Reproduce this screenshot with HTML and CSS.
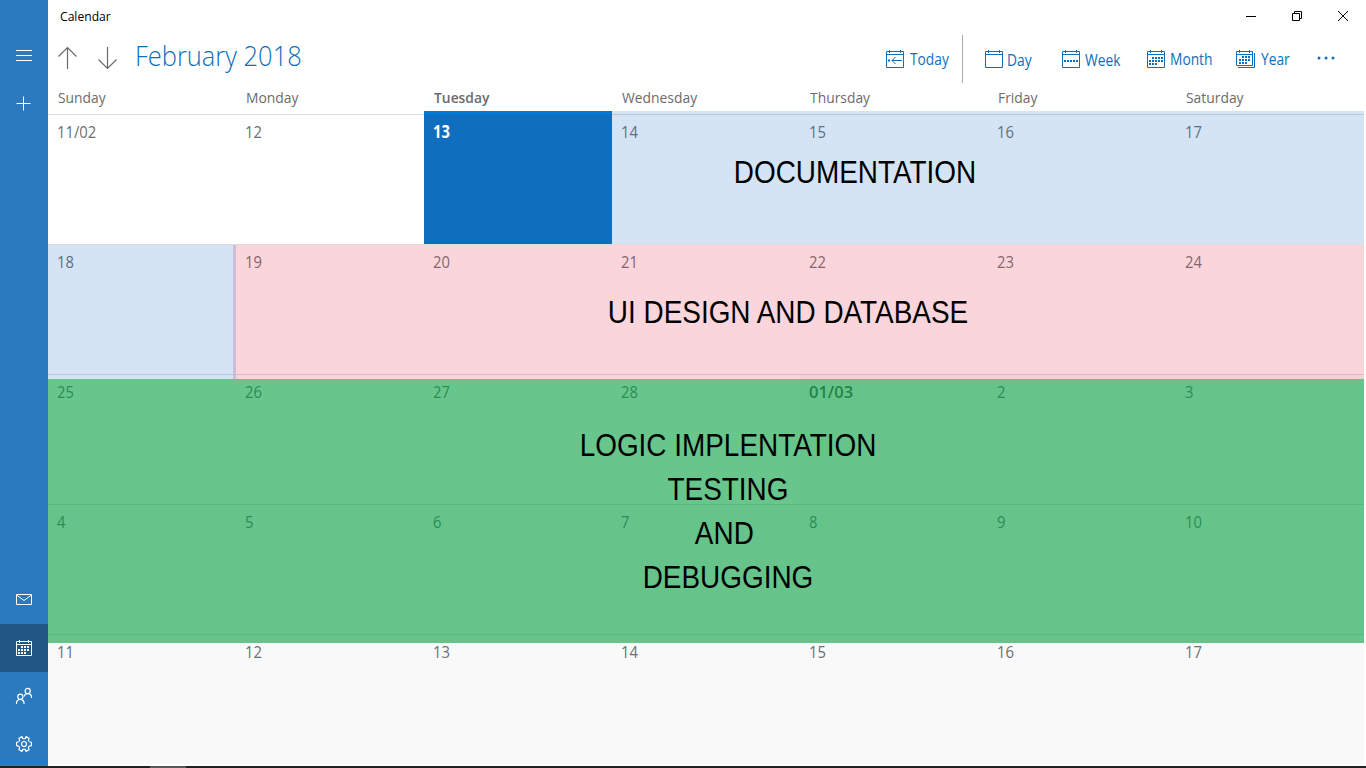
FILE: index.html
```html
<!DOCTYPE html>
<html lang="en">
<head>
<meta charset="utf-8">
<title>Calendar</title>
<link rel="stylesheet" href="styles.css">
</head>
<body>
<div class="window">
  <nav class="rail">
    <div class="rail-item menu"><svg width="16" height="16" viewBox="0 0 16 16"><path d="M0 2.5h16M0 7.5h16M0 12.5h16"/></svg></div>
    <div class="rail-item"><svg width="16" height="16" viewBox="0 0 16 16"><path d="M.5 7.5h14M7.5.5v14"/></svg></div>
    <div class="rail-item mail"><svg width="16" height="16" viewBox="0 0 16 16"><path d="M.5 2.5h15v10H.5zM.5 3l7.5 5.500L15.500 3"/></svg></div>
    <div class="rail-item active"><svg width="16" height="16" viewBox="0 0 16 16"><path d="M.5 1.500h15v14H.5zM.5 4.500h15M3.500 0v3M12.500 0v3"/><path stroke-width="2" stroke-dasharray="2 1" d="M5 7h8M2 10h11M2 13h8"/></svg></div>
    <div class="rail-item"><svg width="16" height="16" viewBox="0 0 16 16"><g stroke-width="1.200"><circle cx="4.300" cy="8.800" r="2.600"/><path d="M.5 16v-1c0-2 1.700-3.500 3.800-3.500S8 13 8 15v1"/><circle cx="11.700" cy="2.900" r="2.600"/><path d="M8.200 8.500C8.500 6.800 9.900 5.600 11.700 5.600c2.100 0 3.800 1.500 3.800 3.500v1"/></g></svg></div>
    <div class="rail-item"><svg width="16" height="16" viewBox="0 0 16 16"><g stroke-width="1.200"><circle cx="8" cy="8" r="2.500"/><path d="M6 .7 6.700 2.500Q8 3.300 9.300 2.500L10 .7 13 2.300 12.400 4.500Q12.700 6 15.400 6.400v3.200Q12.700 10 12.400 11.500L13 13.700 10 15.300 9.300 13.500Q8 12.700 6.700 13.500L6 15.300 3 13.700 3.600 11.500Q3.300 10 .6 9.600V6.400Q3.300 6 3.600 4.500L3 2.300z"/></g></svg></div>
  </nav>
  <main class="main">
    <header class="titlebar">
      <span class="app-name">Calendar</span>
      <div class="controls">
        <svg width="10" height="10" viewBox="0 0 10 10"><path d="M0 5.500h10"/></svg>
        <svg width="10" height="10" viewBox="0 0 10 10"><path d="M.5 2.500h7v7h-7zM2.500 2.500v-2h7v7h-2"/></svg>
        <svg width="10" height="10" viewBox="0 0 10 10"><path d="M0 0l10 10M10 0L0 10"/></svg>
      </div>
    </header>
    <div class="toolbar">
      <svg class="arrow" width="20" height="24" viewBox="0 0 20 24"><path d="M9.500 1.500V23M.5 10.500l9-9 9 9"/></svg>
      <svg class="arrow" width="20" height="24" viewBox="0 0 20 24"><path d="M9.500 1v21.500M.5 13.500l9 9 9-9"/></svg>
      <h1 class="month"><span>February 2018</span></h1>
      <div class="views">
        <div class="view today"><svg width="18" height="18" viewBox="0 0 18 18"><path d="M.5 1.500h17v16H.5zM.5 4.500h17M3.500 0v3M14.500 0v3M6 10.500h10M9.500 7l-3.500 3.500 3.500 3.500"/><path stroke-width="2" d="M2 10.500h2"/></svg><span>Today</span></div>
        <div class="view day"><svg width="18" height="18" viewBox="0 0 18 18"><path d="M.5 1.500h17v16H.5zM.5 4.500h17M3.500 0v3M14.500 0v3"/></svg><span>Day</span></div>
        <div class="view week"><svg width="18" height="18" viewBox="0 0 18 18"><path d="M.5 1.500h17v16H.5zM.5 4.500h17M3.500 0v3M14.500 0v3"/><path stroke-width="2" stroke-dasharray="2 1" d="M2 11h14"/></svg><span>Week</span></div>
        <div class="view month-view"><svg width="18" height="18" viewBox="0 0 18 18"><path d="M.5 1.500h17v16H.5zM.5 4.500h17M3.500 0v3M14.500 0v3"/><path stroke-width="2" stroke-dasharray="2 1" d="M5 8h11M2 11h14M2 14h8"/></svg><span>Month</span></div>
        <div class="view year"><svg width="19" height="18" viewBox="0 0 19 18"><path d="M.5 1.500h16v14H.5zM.5 4.500h16M3.500 0v3M13.500 0v3M18.500 3v14.500H2"/><path stroke-width="2" stroke-dasharray="2 1" d="M6 7h8M3 10h11M3 13h8"/></svg><span>Year</span></div>
        <svg class="more" width="18" height="4" viewBox="0 0 18 4"><circle cx="2" cy="2" r="1.500"/><circle cx="9" cy="2" r="1.500"/><circle cx="16" cy="2" r="1.500"/></svg>
      </div>
    </div>
    <div class="weekdays">
      <div><span>Sunday</span></div><div><span>Monday</span></div><div class="current"><span>Tuesday</span></div><div><span>Wednesday</span></div><div><span>Thursday</span></div><div><span>Friday</span></div><div><span>Saturday</span></div>
    </div>
    <div class="grid">
      <div class="cell"><span>11/02</span></div><div class="cell"><span>12</span></div><div class="cell selected"><span>13</span></div><div class="cell"><span>14</span></div><div class="cell"><span>15</span></div><div class="cell"><span>16</span></div><div class="cell"><span>17</span></div>
      <div class="cell"><span>18</span></div><div class="cell"><span>19</span></div><div class="cell"><span>20</span></div><div class="cell"><span>21</span></div><div class="cell"><span>22</span></div><div class="cell"><span>23</span></div><div class="cell"><span>24</span></div>
      <div class="cell"><span>25</span></div><div class="cell"><span>26</span></div><div class="cell"><span>27</span></div><div class="cell"><span>28</span></div><div class="cell first"><span>01/03</span></div><div class="cell next"><span>2</span></div><div class="cell next"><span>3</span></div>
      <div class="cell next"><span>4</span></div><div class="cell next"><span>5</span></div><div class="cell next"><span>6</span></div><div class="cell next"><span>7</span></div><div class="cell next"><span>8</span></div><div class="cell next"><span>9</span></div><div class="cell next"><span>10</span></div>
      <div class="cell next"><span>11</span></div><div class="cell next"><span>12</span></div><div class="cell next"><span>13</span></div><div class="cell next"><span>14</span></div><div class="cell next"><span>15</span></div><div class="cell next"><span>16</span></div><div class="cell next"><span>17</span></div>
      <div class="span docs"></div>
      <div class="span docs-end"></div>
      <div class="span design"></div>
      <div class="span logic"></div>
      <div class="label docs-label">DOCUMENTATION</div>
      <div class="label design-label">UI DESIGN AND DATABASE</div>
      <div class="label logic-label"><span>LOGIC IMPLENTATION</span><br><span>TESTING</span><br><span class="and">AND</span><br><span>DEBUGGING</span></div>
    </div>
  </main>
  <footer class="taskbar"><div class="task"></div></footer>
</div>
</body>
</html>
```

FILE: styles.css
```css
* { box-sizing: border-box; }
body { margin: 0; font-family: "Open Sans", "Noto Sans", sans-serif; background: #fff; }
svg { display: block; fill: none; flex: none; overflow: visible; }
.window { position: relative; width: 1366px; height: 768px; display: flex; overflow: hidden; }

.rail { width: 48px; flex: none; background: #2b7ac0; display: flex; flex-direction: column; padding-top: 32px; }
.rail-item { height: 48px; flex: none; display: flex; align-items: center; justify-content: center; }
.rail-item svg { stroke: #fff; }
.mail { margin-top: auto; }
.rail-item.active { background: #225785; }

.main { width: 1318px; display: flex; flex-direction: column; }
.titlebar { height: 32px; display: flex; justify-content: space-between; align-items: center; padding: 0 18px 0 12px; }
.app-name { font-size: 12px; color: #000; transform: scaleX(1.01); transform-origin: left; }
.controls { display: flex; gap: 36px; }
.controls svg { stroke: #000; }

.toolbar { height: 52px; display: flex; align-items: center; padding-left: 10px; }
.arrow { stroke: #6a6a6a; stroke-width: 1.2; margin-right: 20px; }
.month { margin: 0 0 4px -3px; width: 200px; font-size: 27px; line-height: 40px; font-weight: 300; color: #0d6ebd; white-space: nowrap; }
.month span { display: inline-block; transform: scaleX(.943); transform-origin: left; }
.views { flex: 1; height: 100%; display: flex; align-items: center; padding: 2px 0 0 551px; color: #0d6ebd; font-size: 16px; }
.view { display: flex; align-items: center; height: 48px; gap: 6px; flex: none; }
.view svg { stroke: #0d6ebd; }
.view span { white-space: nowrap; transform: scaleX(.86); transform-origin: left; }
.today { width: 77px; border-right: 1px solid #aaa; margin-right: 22px; }
.day { width: 77px; gap: 4px; }
.week { width: 85px; gap: 5px; }
.day span, .week span { padding-top: 2px; }
.month-view { width: 89px; gap: 5px; }
.year { width: 81px; }
.more { fill: #0d6ebd; margin-bottom: 2px; }

.weekdays { height: 30px; display: grid; grid-template-columns: repeat(7, 188px); font-size: 14px; line-height: 28px; color: #6b6b6b; padding-left: 10px; }
.weekdays span { display: inline-block; transform: scaleX(.99); transform-origin: left; }
.current { font-weight: 600; }

.grid { position: relative; display: grid; grid-template-columns: repeat(7, 188px); grid-auto-rows: 130px; font-size: 17px; line-height: 22px; color: #6e6e6e; }
.cell { border-top: 1px solid #dcdcdc; padding: 6px 9px; }
.cell span { display: inline-block; transform: scaleX(.87); transform-origin: left; }
.next { background: #f9f9f9; }
.first { background: #f9f9f9; font-weight: 600; color: #555; }
.cell.first span { transform: scaleX(.97); }
.selected { background: #106ebe; color: #fff; font-weight: 700; margin-top: -3px; border-top: 4px solid #0078d7; }

.span { position: absolute; }
.docs { left: 564px; top: -3px; width: 752px; height: 133px; background: rgba(40, 122, 205, .2); }
.docs-end { left: 0; top: 131px; width: 188px; height: 134px; background: rgba(40, 122, 205, .2); }
.design { left: 188px; top: 131px; width: 1128px; height: 134px; background: rgba(231, 62, 92, .22); }
.design::before { content: ""; position: absolute; left: -3px; top: 0; width: 3px; height: 100%; background: #cbbbdc; }
.logic { left: 0; top: 265px; width: 1316px; height: 264px; background: rgba(3, 160, 65, .6); }
.label { position: absolute; font-family: "Liberation Sans", Arial, sans-serif; font-size: 30.5px; line-height: 44px; color: #000; text-align: center; white-space: nowrap; transform: translateX(-50%) scaleX(.915); }
.docs-label { left: 807px; top: 36px; }
.design-label { left: 740px; top: 176px; }
.logic-label { left: 679.5px; top: 309px; }
.and { position: relative; left: -4px; }

.taskbar { position: absolute; left: 0; bottom: 0; width: 100%; height: 2px; background: #202124; padding-left: 150px; }
.task { width: 36px; height: 2px; background: #5a5a5a; }
```
